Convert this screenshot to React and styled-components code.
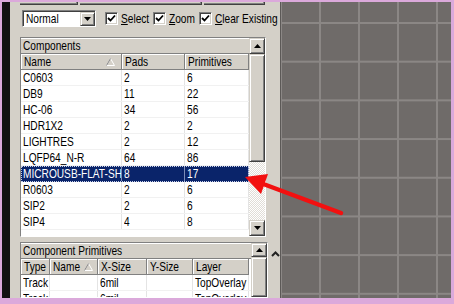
import styled, { createGlobalStyle } from "styled-components";

// Classic Windows palette
const face = '#d4d0c8';
const shadow = '#808080';
const darkShadow = '#404040';
const highlight = '#ffffff';
const navy = '#0a246a';
const pink = '#dba9db';
const canvasGray = '#6f6b69';
const gridLine = '#8b8785';

const fontFamily = '"Liberation Sans", Arial, sans-serif';

const GlobalStyle = createGlobalStyle`
  html, body {
    margin: 0;
    padding: 0;
    background: ${pink};
  }
  body {
    font-family: ${fontFamily};
    font-size: 13px;
    color: #000;
  }
`;

// the screenshot's Tahoma is narrow: squeeze Arial-metric text to match
const Txt = styled.span`
  display: inline-block;
  white-space: nowrap;
  transform: scaleX(0.78);
  transform-origin: 0 50%;
`;

const Frame = styled.div`
  position: relative;
  width: 454px;
  height: 304px;
  box-sizing: border-box;
  padding: 2px 3px 6px 2px;
  background: ${pink};
  display: flex;
  overflow: hidden;
`;

const BlackStrip = styled.div`
  width: 8px;
  flex-shrink: 0;
  background: #111;
`;

const Panel = styled.div`
  width: 270px;
  flex-shrink: 0;
  background: ${face};
  display: flex;
  flex-direction: column;
  overflow: hidden;
`;

const TabStubs = styled.div`
  height: 3px;
  display: flex;
  gap: 2px;
  padding-left: 10px;
`;

const TabStub = styled.div`
  width: ${p => p.w}px;
  border-bottom: 1px solid ${darkShadow};
  border-right: 1px solid ${darkShadow};
  box-shadow: inset -1px -1px ${shadow};
`;

const Toolbar = styled.div`
  display: flex;
  align-items: center;
  height: 17px;
  margin: 5px 0 0 12px;
  white-space: nowrap;
`;

const Combo = styled.div`
  width: 74px;
  height: 17px;
  flex-shrink: 0;
  box-sizing: border-box;
  background: #fff;
  border: 1px solid;
  border-color: ${shadow} ${highlight} ${highlight} ${shadow};
  box-shadow: inset 1px 1px ${darkShadow};
  display: flex;
  align-items: stretch;
  margin-right: 9px;
`;

const ComboText = styled.div`
  flex: 1;
  padding: 1px 0 0 3px;
  line-height: 14px;
  overflow: hidden;
`;

const ComboButton = styled.div`
  width: 15px;
  flex-shrink: 0;
  margin: 1px 0 0 0;
  box-sizing: border-box;
  background: ${face};
  border: 1px solid;
  border-color: ${face} ${darkShadow} ${darkShadow} ${face};
  box-shadow: inset 1px 1px ${highlight}, inset -1px -1px ${shadow};
  display: flex;
  align-items: center;
  justify-content: center;
`;

const CheckLabel = styled.label`
  display: flex;
  align-items: center;
  gap: 3px;
  width: ${p => (p.w ? `${p.w}px` : 'auto')};
  flex-shrink: 0;
`;

const CheckBox = styled.span`
  width: 13px;
  height: 13px;
  flex-shrink: 0;
  box-sizing: border-box;
  background: #fff;
  border: 1px solid;
  border-color: ${shadow} ${highlight} ${highlight} ${shadow};
  box-shadow: inset 1px 1px ${darkShadow}, inset -1px -1px ${face};
  display: flex;
  align-items: center;
  justify-content: center;
`;

const Key = styled.span`
  text-decoration: underline;
`;

const Box = styled.div`
  display: flex;
  width: 246px;
  margin: ${p => p.mt}px 0 0 10px;
  box-sizing: border-box;
  height: ${p => (p.h ? `${p.h}px` : 'auto')};
  flex: ${p => (p.h ? 'none' : '1')};
  border: 1px solid;
  border-color: ${shadow} ${highlight} ${highlight} ${shadow};
  background: #fff;
  overflow: hidden;
`;

const List = styled.div`
  flex: 1;
  display: flex;
  flex-direction: column;
  overflow: hidden;
`;

const TitleBar = styled.div`
  height: 16px;
  box-sizing: border-box;
  background: ${face};
  border-bottom: 1px solid ${shadow};
  box-shadow: inset 0 1px ${highlight};
  padding-left: 2px;
  line-height: 15px;
  white-space: nowrap;
  flex-shrink: 0;
`;

const Grid = styled.div`
  display: grid;
  grid-template-columns: ${p => p.cols};
  height: 16px;
  box-sizing: border-box;
  flex-shrink: 0;
`;

const HeadCell = styled.div`
  background: ${face};
  border-right: 1px solid ${shadow};
  border-bottom: 1px solid ${shadow};
  box-shadow: inset 1px 1px ${highlight};
  padding-left: 3px;
  line-height: 15px;
  white-space: nowrap;
  overflow: hidden;
  display: flex;
  align-items: center;
`;

const SortMark = styled.span`
  display: inline-flex;
  flex-shrink: 0;
  margin-left: ${p => (p.at ? 'auto' : '-4px')};
  margin-right: ${p => (p.at ? '6px' : '0')};
`;

const DataRow = styled(Grid)`
  background: ${p => (p.selected ? navy : '#fff')};
  color: ${p => (p.selected ? '#fff' : '#000')};
  outline: ${p => (p.selected ? '1px dotted #c8d0e8' : 'none')};
  outline-offset: -1px;
  border-bottom: 1px solid ${p => (p.selected ? navy : '#f1f1f1')};
`;

const Cell = styled.div`
  padding-left: 2px;
  line-height: 15px;
  white-space: nowrap;
  overflow: hidden;
  border-right: 1px solid ${p => (p.selected ? '#7d8cb8' : '#e4e4e4')};
`;

const ScrollBar = styled.div`
  width: 16px;
  flex-shrink: 0;
  display: flex;
  flex-direction: column;
  background: ${face};
`;

const ScrollButton = styled.div`
  height: ${p => p.h || 16}px;
  box-sizing: border-box;
  background: ${face};
  border: 1px solid;
  border-color: ${face} ${darkShadow} ${darkShadow} ${face};
  box-shadow: inset 1px 1px ${highlight}, inset -1px -1px ${shadow};
  display: flex;
  align-items: center;
  justify-content: center;
  flex-shrink: 0;
`;

const Thumb = styled(ScrollButton)`
  height: ${p => (p.h ? `${p.h}px` : 'auto')};
  flex: ${p => (p.h ? 'none' : '1')};
`;

const Track = styled.div`
  flex: 1;
  background: repeating-conic-gradient(#ffffff 0 25%, #e0ddd7 0 50%) 0 0 / 2px 2px;
`;

const BottomRow = styled.div`
  display: flex;
  flex: 1;
  min-height: 0;
  margin-top: 5px;
`;

const Caret = styled.div`
  padding: 3px 0 0 3px;
`;

const Canvas = styled.div`
  flex: 1;
  background-color: ${canvasGray};
  background-image:
    linear-gradient(to right, ${gridLine} 2px, transparent 2px),
    linear-gradient(to bottom, ${gridLine} 2px, transparent 2px);
  background-size: 39px 38.7px;
  background-position: 38px 20px;
  border-left: 1px solid #5c5957;
`;

const Overlay = styled.svg`
  position: absolute;
  left: 0;
  top: 0;
  pointer-events: none;
`;

const Tri = ({ down }) => (
  <svg width="7" height="4" viewBox="0 0 7 4">
    <polygon points={down ? '0,0 7,0 3.5,4' : '0,4 7,4 3.5,0'} fill="#000" />
  </svg>
);

const Check = () => (
  <svg width="9" height="9" viewBox="0 0 9 9">
    <path d="M1 4 L3.5 6.5 L8 1.5" stroke="#000" strokeWidth="1.8" fill="none" />
  </svg>
);

const SortTri = () => (
  <svg width="9" height="8" viewBox="0 0 9 8">
    <polygon points="0.5,7.5 8.5,7.5 4.5,0.5" fill="none" stroke={highlight} />
    <polyline points="0.5,7.5 4.5,0.5" fill="none" stroke={shadow} />
  </svg>
);

const components = [
  ['C0603', '2', '6'],
  ['DB9', '11', '22'],
  ['HC-06', '34', '56'],
  ['HDR1X2', '2', '2'],
  ['LIGHTRES', '2', '12'],
  ['LQFP64_N-R', '64', '86'],
  ['MICROUSB-FLAT-SH', '8', '17'],
  ['R0603', '2', '6'],
  ['SIP2', '2', '6'],
  ['SIP4', '4', '8'],
];

const primitives = [
  ['Track', '', '6mil', '', 'TopOverlay'],
  ['Track', '', '6mil', '', 'TopOverlay'],
];

const compCols = '101px 63px 64px';
const primCols = '29px 48px 49px 46px 56px';

const App = () => (
  <>
    <GlobalStyle />
    <Frame>
      <BlackStrip />
      <Panel>
        <TabStubs>
          <TabStub w={57} />
          <TabStub w={121} />
          <TabStub w={60} />
        </TabStubs>
        <Toolbar>
          <Combo>
            <ComboText><Txt>Normal</Txt></ComboText>
            <ComboButton><Tri down /></ComboButton>
          </Combo>
          <CheckLabel w={48}><CheckBox><Check /></CheckBox><Txt><Key>S</Key>elect</Txt></CheckLabel>
          <CheckLabel w={46}><CheckBox><Check /></CheckBox><Txt><Key>Z</Key>oom</Txt></CheckLabel>
          <CheckLabel><CheckBox><Check /></CheckBox><Txt><Key>C</Key>lear Existing</Txt></CheckLabel>
        </Toolbar>

        <Box mt={10} h={200}>
          <List>
            <TitleBar><Txt>Components</Txt></TitleBar>
            <Grid cols={compCols}>
              <HeadCell><Txt>Name</Txt><SortMark at><SortTri /></SortMark></HeadCell>
              <HeadCell><Txt>Pads</Txt></HeadCell>
              <HeadCell><Txt>Primitives</Txt></HeadCell>
            </Grid>
            {components.map(([name, pads, prims]) => {
              const sel = name === 'MICROUSB-FLAT-SH';
              return (
                <DataRow key={name} cols={compCols} selected={sel}>
                  <Cell selected={sel}><Txt>{name}</Txt></Cell>
                  <Cell selected={sel}><Txt>{pads}</Txt></Cell>
                  <Cell selected={sel}><Txt>{prims}</Txt></Cell>
                </DataRow>
              );
            })}
          </List>
          <ScrollBar>
            <ScrollButton><Tri /></ScrollButton>
            <Thumb h={108} />
            <Track />
            <ScrollButton><Tri down /></ScrollButton>
          </ScrollBar>
        </Box>

        <BottomRow>
          <Box mt={0}>
            <List>
              <TitleBar><Txt>Component Primitives</Txt></TitleBar>
              <Grid cols={primCols}>
                <HeadCell><Txt>Type</Txt></HeadCell>
                <HeadCell><Txt>Name</Txt><SortMark><SortTri /></SortMark></HeadCell>
                <HeadCell><Txt>X-Size</Txt></HeadCell>
                <HeadCell><Txt>Y-Size</Txt></HeadCell>
                <HeadCell><Txt>Layer</Txt></HeadCell>
              </Grid>
              {primitives.map((r, i) => (
                <DataRow key={i} cols={primCols}>
                  {r.map((v, j) => (
                    <Cell key={j}><Txt>{v}</Txt></Cell>
                  ))}
                </DataRow>
              ))}
            </List>
            <ScrollBar>
              <ScrollButton h={14}><Tri /></ScrollButton>
              <Thumb />
            </ScrollBar>
          </Box>
          <Caret>
            <svg width="9" height="6" viewBox="0 0 9 6">
              <polyline points="1,5 4.5,1.5 8,5" fill="none" stroke="#222" strokeWidth="2" />
            </svg>
          </Caret>
        </BottomRow>
      </Panel>
      <Canvas />
      <Overlay width="454" height="304" viewBox="0 0 454 304">
        <line x1="341" y1="213" x2="258" y2="182" stroke="#f21010" strokeWidth="4.5" strokeLinecap="round" />
        <polygon points="245,177 268,174 261,194" fill="#f21010" />
      </Overlay>
    </Frame>
  </>
);

export default App;
